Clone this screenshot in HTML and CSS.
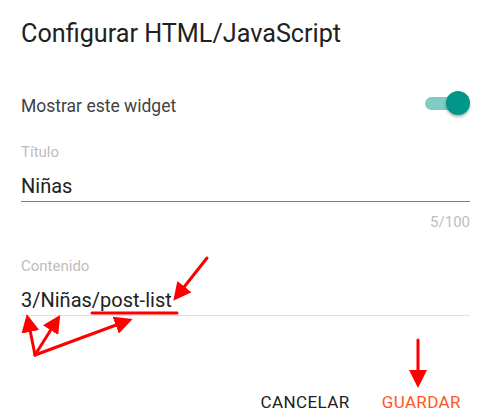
FILE: index.html
```html
<!DOCTYPE html>
<html lang="es">

<head>
    <meta charset="UTF-8">
    <meta name="viewport" content="width=device-width, initial-scale=1.0">
    <title>Configurar HTML/JavaScript</title>
    <link rel="stylesheet" href="styles.css">
</head>

<body>
    <div id="dialog">
        <h1 class="title">Configurar HTML/JavaScript</h1>

        <div class="switchRow">
            <span class="switchLabel">Mostrar este widget</span>
            <span class="toggle">
                <span class="track"></span>
                <span class="knob"></span>
            </span>
        </div>

        <div class="field">
            <div class="label">Título</div>
            <div class="input focused">Niñas</div>
            <div class="counter">5/100</div>
        </div>

        <div class="field second">
            <div class="label">Contenido</div>
            <div class="input">3/Niñas/post-list</div>
        </div>

        <div class="actions">
            <span class="btn">CANCELAR</span>
            <span class="btn primary">GUARDAR</span>
        </div>
    </div>

    <!-- marcas rojas dibujadas encima de la captura -->
    <svg class="marks" width="493" height="420" viewBox="0 0 493 420">
        <defs>
            <marker id="head" markerWidth="6" markerHeight="6" refX="4" refY="3" orient="auto" markerUnits="strokeWidth">
                <path d="M0,0 L6,3 L0,6 Z" fill="#f00" />
            </marker>
        </defs>
        <g stroke="#f00" stroke-width="3" stroke-linecap="round" fill="none">
            <line x1="92" y1="313" x2="177" y2="313" />
            <line x1="207" y1="258" x2="177" y2="296" marker-end="url(#head)" />
            <line x1="35" y1="355" x2="28" y2="320" marker-end="url(#head)" />
            <line x1="35" y1="355" x2="57" y2="320" marker-end="url(#head)" />
            <line x1="35" y1="355" x2="127" y2="321" marker-end="url(#head)" />
            <line x1="418" y1="340" x2="418" y2="382" marker-end="url(#head)" />
        </g>
    </svg>
</body>

</html>
```

FILE: styles.css
```css
body {
    margin: 0;
    background: #fff;
    font-family: Roboto, "Liberation Sans", sans-serif;
    color: #212121;
}

#dialog {
    width: 449px;
    padding: 18px 23px 0 21px;
}

.title {
    margin: 0;
    font-size: 25.2px;
    line-height: 32px;
    font-weight: 400;
}

.switchRow {
    display: flex;
    justify-content: space-between;
    margin-top: 44px;
    height: 24px;
}

.switchLabel {
    font-size: 17.5px;
    line-height: 24px;
    color: #424242;
}

.toggle {
    position: relative;
    width: 47px;
    height: 24px;
    margin-top: -3px;
}

.track {
    position: absolute;
    left: 2px;
    top: 6px;
    width: 40px;
    height: 13px;
    border-radius: 7px;
    background: #80cbc4;
}

.knob {
    position: absolute;
    right: 0;
    top: 0;
    width: 24px;
    height: 24px;
    border-radius: 50%;
    background: #009688;
    box-shadow: 0 2px 3px rgba(0, 0, 0, 0.3);
}

.field {
    margin-top: 24px;
}

.field.second {
    margin-top: 24px;
}

.label {
    font-size: 15px;
    line-height: 20px;
    color: #bdbdbd;
}

.input {
    margin-top: 10px;
    font-size: 20px;
    line-height: 28px;
    padding-bottom: 1px;
    border-bottom: 1px solid #e0e0e0;
}

.input.focused {
    border-bottom-color: #f4511e;
}

.counter {
    margin-top: 10px;
    text-align: right;
    font-size: 15px;
    line-height: 20px;
    color: #bdbdbd;
}

.actions {
    display: flex;
    justify-content: flex-end;
    gap: 32px;
    margin-top: 76px;
    padding-right: 9px;
}

.btn {
    font-size: 17px;
    line-height: 20px;
    font-weight: 400;
    letter-spacing: 0.4px;
    color: #212121;
}

.btn.primary {
    color: #ff5722;
}

.marks {
    position: absolute;
    left: 0;
    top: 0;
    pointer-events: none;
}
```
